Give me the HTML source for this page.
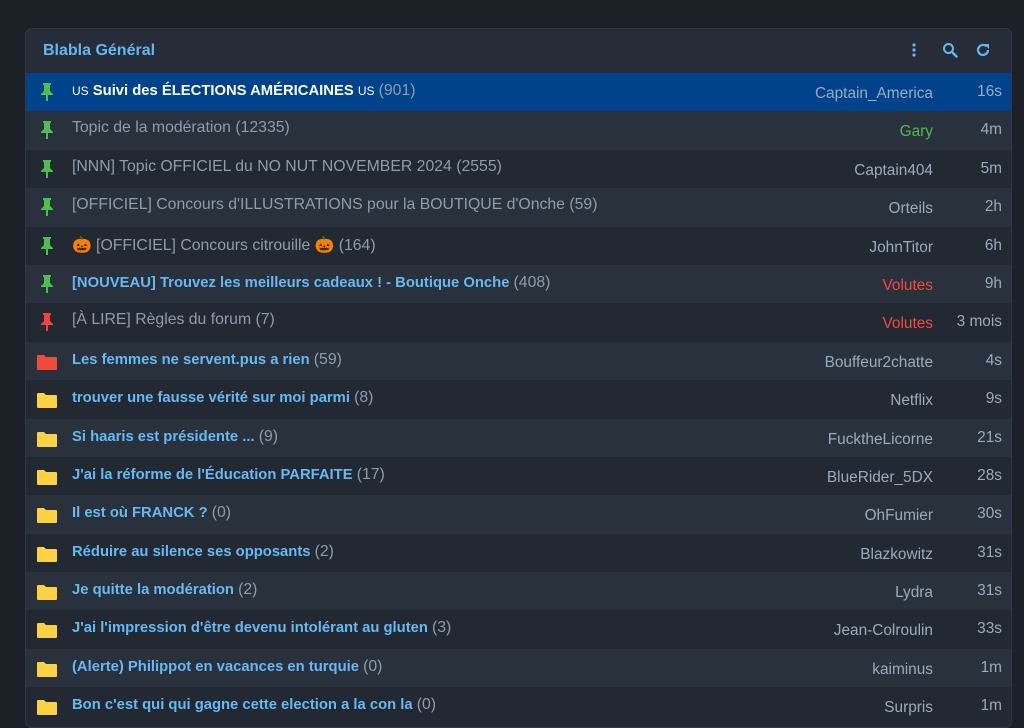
<!DOCTYPE html>
<html><head><meta charset="utf-8"><style>
*{margin:0;padding:0;box-sizing:border-box}
body{width:1024px;height:709px;overflow:hidden;background:#1c2027;font-family:"Liberation Sans",Roboto,sans-serif;font-size:15.8px}
.panel{position:absolute;left:25px;top:28px;width:987px;height:700px;background:#262d38;border:1px solid #313946;border-radius:7px;overflow:hidden}
.hd{height:44px;display:flex;align-items:center;padding-left:17px;color:#63b8f2;font-weight:bold;font-size:16px;position:relative}
.ic{position:absolute;top:13px}
.row{height:38.4px;display:flex;align-items:center;position:relative;background:#222932}
.row.l{background:#29313c}
.row.sel{background:#00438a}
.row .i{position:absolute;left:14px;top:10px}
.t{position:absolute;left:46px;top:8px;white-space:nowrap;color:#8f9cad}
.t.b{color:#66b9f3;font-weight:bold;font-size:14.8px;top:9px}
.t.w{color:#fff;font-weight:bold;font-size:14.8px;top:9px}
.t span{font-weight:normal;color:#8f9cad;font-size:15.8px}
.u{position:absolute;right:78px;top:12px;color:#9aabbf;font-size:15.4px}
.tm{position:absolute;right:9px;top:10px;color:#9aabbf;font-size:15.4px}
.g{color:#4fba4f}.r{color:#f44a3e}
.sm{font-size:12px!important;font-weight:normal}
</style></head><body>
<div class="panel">
<div class="hd">Blabla Général
<svg class="ic" style="left:885px" width="6" height="16"><circle cx="3" cy="3" r="1.6" fill="#63b8f2"/><circle cx="3" cy="8" r="1.6" fill="#63b8f2"/><circle cx="3" cy="13" r="1.6" fill="#63b8f2"/></svg>
<svg class="ic" style="left:916px" width="16" height="16"><circle cx="6.5" cy="6.5" r="4.5" fill="none" stroke="#63b8f2" stroke-width="2"/><path d="M10 10l4.5 4.5" stroke="#63b8f2" stroke-width="2.4" stroke-linecap="round"/></svg>
<svg class="ic" style="left:949px" width="16" height="16"><path d="M13 8a5 5 0 1 1-1.6-3.7" fill="none" stroke="#63b8f2" stroke-width="2.2"/><path d="M9 2h5v5z" fill="#63b8f2"/></svg>
</div>
<div id="rows"></div>
</div>
<script>
var P='<svg class="i" width="14" height="18" viewBox="0 0 14 18"><path d="M3 0h8v2h-1v6l3 3v1H1v-1l3-3V2H3z" fill="C"/><rect x="6" y="12" width="2" height="6" fill="C"/></svg>';
var F='<svg class="i" width="20" height="16" viewBox="0 0 20 16" style="left:11px;top:12px"><path d="M0 2a1 1 0 0 1 1-1h6l2 2h10a1 1 0 0 1 1 1v11a1 1 0 0 1-1 1H1a1 1 0 0 1-1-1z" fill="C"/></svg>';
var d=[
['sel',P,'#4cc04c','w','<span class="sm" style="color:#fff">US</span> Suivi des ÉLECTIONS AMÉRICAINES <span class="sm" style="color:#fff">US</span>','901','Captain_America','','16s'],
['l',P,'#4cc04c','','Topic de la modération','12335','Gary','g','4m'],
['',P,'#4cc04c','','[NNN] Topic OFFICIEL du NO NUT NOVEMBER 2024','2555','Captain404','','5m'],
['l',P,'#4cc04c','','[OFFICIEL] Concours d\'ILLUSTRATIONS pour la BOUTIQUE d\'Onche','59','Orteils','','2h'],
['',P,'#4cc04c','','<span style="color:#e8773a">🎃</span> [OFFICIEL] Concours citrouille <span style="color:#e8773a">🎃</span>','164','JohnTitor','','6h'],
['l',P,'#4cc04c','b','[NOUVEAU] Trouvez les meilleurs cadeaux ! - Boutique Onche','408','Volutes','r','9h'],
['',P,'#f04438','','[À LIRE] Règles du forum','7','Volutes','r','3 mois'],
['l',F,'#ee4b3b','b','Les femmes ne servent.pus a rien','59','Bouffeur2chatte','','4s'],
['',F,'#fcd144','b','trouver une fausse vérité sur moi parmi','8','Netflix','','9s'],
['l',F,'#fcd144','b','Si haaris est présidente ...','9','FucktheLicorne','','21s'],
['',F,'#fcd144','b','J\'ai la réforme de l\'Éducation PARFAITE','17','BlueRider_5DX','','28s'],
['l',F,'#fcd144','b','Il est où FRANCK ?','0','OhFumier','','30s'],
['',F,'#fcd144','b','Réduire au silence ses opposants','2','Blazkowitz','','31s'],
['l',F,'#fcd144','b','Je quitte la modération','2','Lydra','','31s'],
['',F,'#fcd144','b','J\'ai l\'impression d\'être devenu intolérant au gluten','3','Jean-Colroulin','','33s'],
['l',F,'#fcd144','b','(Alerte) Philippot en vacances en turquie','0','kaiminus','','1m'],
['',F,'#fcd144','b','Bon c\'est qui qui gagne cette election a la con la','0','Surpris','','1m']];
var h='';d.forEach(function(r){h+='<div class="row '+r[0]+'">'+r[1].replace(/C/g,r[2])+'<div class="t '+r[3]+'">'+r[4]+' <span>('+r[5]+')</span></div><div class="u '+r[7]+'">'+r[6]+'</div><div class="tm">'+r[8]+'</div></div>';});
document.getElementById('rows').innerHTML=h;
</script>
</body></html>
